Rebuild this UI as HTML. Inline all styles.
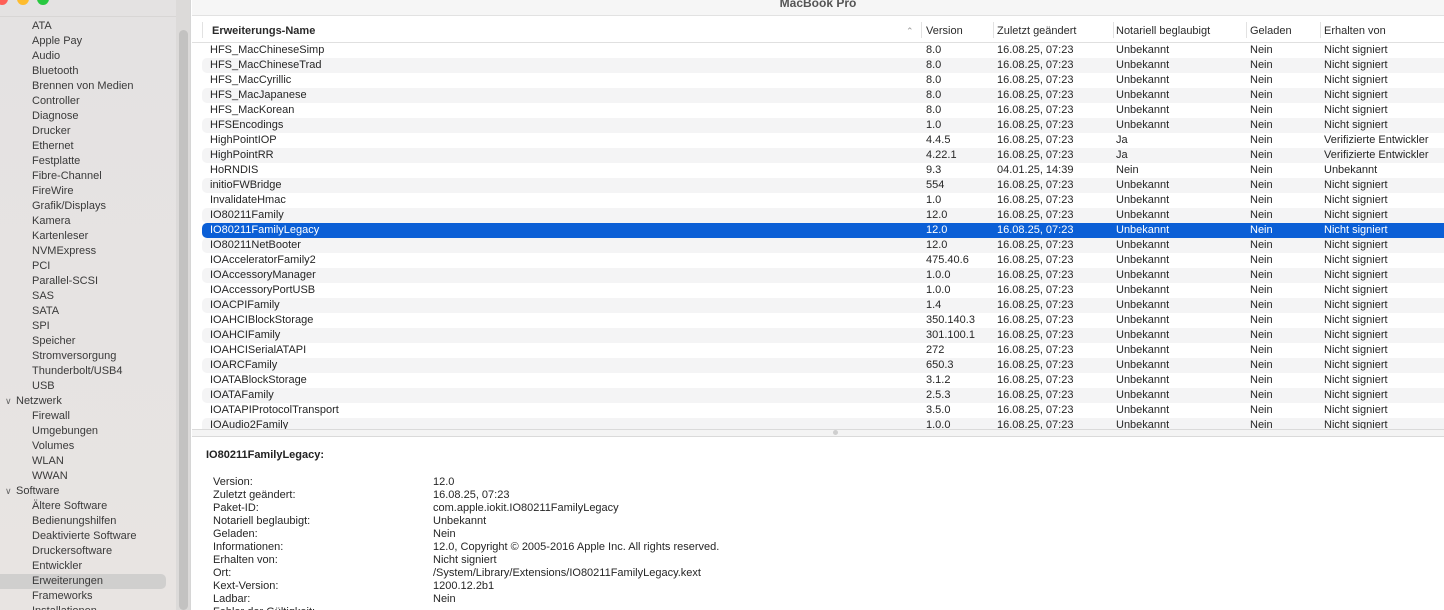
<!DOCTYPE html>
<html><head><meta charset="utf-8"><style>
*{margin:0;padding:0;box-sizing:border-box}
html,body{width:1444px;height:610px;overflow:hidden}
body{font-family:"Liberation Sans",sans-serif;font-size:11px;color:#262626;background:#fff;position:relative}
#sb{position:absolute;left:0;top:0;width:191px;height:610px;background:linear-gradient(#e4e2e2,#e8e4e2);border-right:1px solid #d6d6d6;overflow:hidden}
.tl{position:absolute;top:-7px;width:12px;height:12px;border-radius:50%}
#sb .it{position:absolute;left:32px;height:15px;line-height:15px;color:#3a3a3a}
#sb .sec{position:absolute;left:16px;height:15px;line-height:15px;color:#3a3a3a}
#sb .chev{position:absolute;left:5px;color:#666;font-size:9px}
#sel{position:absolute;left:0;top:574px;width:166px;height:15px;background:#d0cfce;border-radius:0 5px 5px 0}
#track{position:absolute;left:176px;top:0;width:15px;height:610px;background:#dcdad9}
#thumb{position:absolute;left:179px;top:30px;width:9px;height:580px;background:#c3c2c1;border-radius:5px}
#title{position:absolute;left:192px;top:0;right:0;height:16px;background:#f6f6f6;border-bottom:1px solid #e2e2e2;text-align:center;font-weight:bold;color:#555;font-size:12px;line-height:6px;overflow:hidden}
#hdr{position:absolute;left:192px;top:17px;right:0;height:26px;border-bottom:1px solid #e0e0e0;background:#fff}
#hdr span{position:absolute;top:8px;color:#2a2a2a}
#hdr i{position:absolute;top:5px;width:1px;height:16px;background:#e2e2e2}
.row{position:absolute;left:202px;right:0;height:15px;line-height:15px;white-space:nowrap}
.row.s{background:#f4f4f5;border-radius:5px 0 0 5px}
.row.h{background:#0b5fd6;color:#fff;border-radius:5px 0 0 5px}
.row span{position:absolute;top:0}
.c1{left:8px}.c2{left:724px}.c3{left:795px}.c4{left:914px}.c5{left:1048px}.c6{left:1122px}
#list{position:absolute;left:0;top:44px;right:0;height:385px;overflow:hidden}
#list .in{position:absolute;left:0;right:0;top:-1px}
#div{position:absolute;left:192px;top:429px;right:0;height:8px;border-top:1px solid #dadada;border-bottom:1px solid #dadada;background:#f4f4f4}
#dot{position:absolute;left:833px;top:430px;width:5px;height:5px;border-radius:50%;background:#cfcfcf}
.lb{position:absolute;left:213px;line-height:13px}
.vl{position:absolute;left:433px;line-height:13px}
</style></head><body>
<div id="sb">
<div class="tl" style="left:-4px;background:#fe5f57"></div>
<div class="tl" style="left:17px;background:#febc2e"></div>
<div class="tl" style="left:37px;background:#28c840"></div>
<div style="position:absolute;left:0;top:16px;width:176px;height:1px;background:#d8d6d5"></div>
<div id="track"></div><div id="thumb"></div>
<div id="sel"></div>
<div class="it" style="top:19px">ATA</div>
<div class="it" style="top:34px">Apple Pay</div>
<div class="it" style="top:49px">Audio</div>
<div class="it" style="top:64px">Bluetooth</div>
<div class="it" style="top:79px">Brennen von Medien</div>
<div class="it" style="top:94px">Controller</div>
<div class="it" style="top:109px">Diagnose</div>
<div class="it" style="top:124px">Drucker</div>
<div class="it" style="top:139px">Ethernet</div>
<div class="it" style="top:154px">Festplatte</div>
<div class="it" style="top:169px">Fibre-Channel</div>
<div class="it" style="top:184px">FireWire</div>
<div class="it" style="top:199px">Grafik/Displays</div>
<div class="it" style="top:214px">Kamera</div>
<div class="it" style="top:229px">Kartenleser</div>
<div class="it" style="top:244px">NVMExpress</div>
<div class="it" style="top:259px">PCI</div>
<div class="it" style="top:274px">Parallel-SCSI</div>
<div class="it" style="top:289px">SAS</div>
<div class="it" style="top:304px">SATA</div>
<div class="it" style="top:319px">SPI</div>
<div class="it" style="top:334px">Speicher</div>
<div class="it" style="top:349px">Stromversorgung</div>
<div class="it" style="top:364px">Thunderbolt/USB4</div>
<div class="it" style="top:379px">USB</div>
<div class="chev" style="top:396px">&#8744;</div><div class="sec" style="top:394px">Netzwerk</div>
<div class="it" style="top:409px">Firewall</div>
<div class="it" style="top:424px">Umgebungen</div>
<div class="it" style="top:439px">Volumes</div>
<div class="it" style="top:454px">WLAN</div>
<div class="it" style="top:469px">WWAN</div>
<div class="chev" style="top:486px">&#8744;</div><div class="sec" style="top:484px">Software</div>
<div class="it" style="top:499px">Ältere Software</div>
<div class="it" style="top:514px">Bedienungshilfen</div>
<div class="it" style="top:529px">Deaktivierte Software</div>
<div class="it" style="top:544px">Druckersoftware</div>
<div class="it" style="top:559px">Entwickler</div>
<div class="it" style="top:574px">Erweiterungen</div>
<div class="it" style="top:589px">Frameworks</div>
<div class="it" style="top:604px">Installationen</div>
</div>
<div id="title">MacBook Pro</div>
<div id="hdr">
<i style="left:10px"></i>
<span style="left:20px;font-weight:bold">Erweiterungs-Name</span>
<span style="left:714px;color:#999;font-size:9px;top:9px">&#8963;</span>
<i style="left:729px"></i><span style="left:734px">Version</span>
<i style="left:801px"></i><span style="left:805px">Zuletzt geändert</span>
<i style="left:921px"></i><span style="left:924px">Notariell beglaubigt</span>
<i style="left:1054px"></i><span style="left:1058px">Geladen</span>
<i style="left:1128px"></i><span style="left:1132px">Erhalten von</span>
</div>
<div id="list"><div class="in">
<div class="row" style="top:0"><span class="c1">HFS_MacChineseSimp</span><span class="c2">8.0</span><span class="c3">16.08.25, 07:23</span><span class="c4">Unbekannt</span><span class="c5">Nein</span><span class="c6">Nicht signiert</span></div>
<div class="row s" style="top:15px"><span class="c1">HFS_MacChineseTrad</span><span class="c2">8.0</span><span class="c3">16.08.25, 07:23</span><span class="c4">Unbekannt</span><span class="c5">Nein</span><span class="c6">Nicht signiert</span></div>
<div class="row" style="top:30px"><span class="c1">HFS_MacCyrillic</span><span class="c2">8.0</span><span class="c3">16.08.25, 07:23</span><span class="c4">Unbekannt</span><span class="c5">Nein</span><span class="c6">Nicht signiert</span></div>
<div class="row s" style="top:45px"><span class="c1">HFS_MacJapanese</span><span class="c2">8.0</span><span class="c3">16.08.25, 07:23</span><span class="c4">Unbekannt</span><span class="c5">Nein</span><span class="c6">Nicht signiert</span></div>
<div class="row" style="top:60px"><span class="c1">HFS_MacKorean</span><span class="c2">8.0</span><span class="c3">16.08.25, 07:23</span><span class="c4">Unbekannt</span><span class="c5">Nein</span><span class="c6">Nicht signiert</span></div>
<div class="row s" style="top:75px"><span class="c1">HFSEncodings</span><span class="c2">1.0</span><span class="c3">16.08.25, 07:23</span><span class="c4">Unbekannt</span><span class="c5">Nein</span><span class="c6">Nicht signiert</span></div>
<div class="row" style="top:90px"><span class="c1">HighPointIOP</span><span class="c2">4.4.5</span><span class="c3">16.08.25, 07:23</span><span class="c4">Ja</span><span class="c5">Nein</span><span class="c6">Verifizierte Entwickler</span></div>
<div class="row s" style="top:105px"><span class="c1">HighPointRR</span><span class="c2">4.22.1</span><span class="c3">16.08.25, 07:23</span><span class="c4">Ja</span><span class="c5">Nein</span><span class="c6">Verifizierte Entwickler</span></div>
<div class="row" style="top:120px"><span class="c1">HoRNDIS</span><span class="c2">9.3</span><span class="c3">04.01.25, 14:39</span><span class="c4">Nein</span><span class="c5">Nein</span><span class="c6">Unbekannt</span></div>
<div class="row s" style="top:135px"><span class="c1">initioFWBridge</span><span class="c2">554</span><span class="c3">16.08.25, 07:23</span><span class="c4">Unbekannt</span><span class="c5">Nein</span><span class="c6">Nicht signiert</span></div>
<div class="row" style="top:150px"><span class="c1">InvalidateHmac</span><span class="c2">1.0</span><span class="c3">16.08.25, 07:23</span><span class="c4">Unbekannt</span><span class="c5">Nein</span><span class="c6">Nicht signiert</span></div>
<div class="row s" style="top:165px"><span class="c1">IO80211Family</span><span class="c2">12.0</span><span class="c3">16.08.25, 07:23</span><span class="c4">Unbekannt</span><span class="c5">Nein</span><span class="c6">Nicht signiert</span></div>
<div class="row h" style="top:180px"><span class="c1">IO80211FamilyLegacy</span><span class="c2">12.0</span><span class="c3">16.08.25, 07:23</span><span class="c4">Unbekannt</span><span class="c5">Nein</span><span class="c6">Nicht signiert</span></div>
<div class="row s" style="top:195px"><span class="c1">IO80211NetBooter</span><span class="c2">12.0</span><span class="c3">16.08.25, 07:23</span><span class="c4">Unbekannt</span><span class="c5">Nein</span><span class="c6">Nicht signiert</span></div>
<div class="row" style="top:210px"><span class="c1">IOAcceleratorFamily2</span><span class="c2">475.40.6</span><span class="c3">16.08.25, 07:23</span><span class="c4">Unbekannt</span><span class="c5">Nein</span><span class="c6">Nicht signiert</span></div>
<div class="row s" style="top:225px"><span class="c1">IOAccessoryManager</span><span class="c2">1.0.0</span><span class="c3">16.08.25, 07:23</span><span class="c4">Unbekannt</span><span class="c5">Nein</span><span class="c6">Nicht signiert</span></div>
<div class="row" style="top:240px"><span class="c1">IOAccessoryPortUSB</span><span class="c2">1.0.0</span><span class="c3">16.08.25, 07:23</span><span class="c4">Unbekannt</span><span class="c5">Nein</span><span class="c6">Nicht signiert</span></div>
<div class="row s" style="top:255px"><span class="c1">IOACPIFamily</span><span class="c2">1.4</span><span class="c3">16.08.25, 07:23</span><span class="c4">Unbekannt</span><span class="c5">Nein</span><span class="c6">Nicht signiert</span></div>
<div class="row" style="top:270px"><span class="c1">IOAHCIBlockStorage</span><span class="c2">350.140.3</span><span class="c3">16.08.25, 07:23</span><span class="c4">Unbekannt</span><span class="c5">Nein</span><span class="c6">Nicht signiert</span></div>
<div class="row s" style="top:285px"><span class="c1">IOAHCIFamily</span><span class="c2">301.100.1</span><span class="c3">16.08.25, 07:23</span><span class="c4">Unbekannt</span><span class="c5">Nein</span><span class="c6">Nicht signiert</span></div>
<div class="row" style="top:300px"><span class="c1">IOAHCISerialATAPI</span><span class="c2">272</span><span class="c3">16.08.25, 07:23</span><span class="c4">Unbekannt</span><span class="c5">Nein</span><span class="c6">Nicht signiert</span></div>
<div class="row s" style="top:315px"><span class="c1">IOARCFamily</span><span class="c2">650.3</span><span class="c3">16.08.25, 07:23</span><span class="c4">Unbekannt</span><span class="c5">Nein</span><span class="c6">Nicht signiert</span></div>
<div class="row" style="top:330px"><span class="c1">IOATABlockStorage</span><span class="c2">3.1.2</span><span class="c3">16.08.25, 07:23</span><span class="c4">Unbekannt</span><span class="c5">Nein</span><span class="c6">Nicht signiert</span></div>
<div class="row s" style="top:345px"><span class="c1">IOATAFamily</span><span class="c2">2.5.3</span><span class="c3">16.08.25, 07:23</span><span class="c4">Unbekannt</span><span class="c5">Nein</span><span class="c6">Nicht signiert</span></div>
<div class="row" style="top:360px"><span class="c1">IOATAPIProtocolTransport</span><span class="c2">3.5.0</span><span class="c3">16.08.25, 07:23</span><span class="c4">Unbekannt</span><span class="c5">Nein</span><span class="c6">Nicht signiert</span></div>
<div class="row s" style="top:375px"><span class="c1">IOAudio2Family</span><span class="c2">1.0.0</span><span class="c3">16.08.25, 07:23</span><span class="c4">Unbekannt</span><span class="c5">Nein</span><span class="c6">Nicht signiert</span></div>
</div></div>
<div id="div"></div><div id="dot"></div>
<div style="position:absolute;left:206px;top:449px;font-weight:bold;color:#222">IO80211FamilyLegacy:</div>
<div class="lb" style="top:476px">Version:</div><div class="vl" style="top:476px">12.0</div>
<div class="lb" style="top:489px">Zuletzt geändert:</div><div class="vl" style="top:489px">16.08.25, 07:23</div>
<div class="lb" style="top:502px">Paket-ID:</div><div class="vl" style="top:502px">com.apple.iokit.IO80211FamilyLegacy</div>
<div class="lb" style="top:515px">Notariell beglaubigt:</div><div class="vl" style="top:515px">Unbekannt</div>
<div class="lb" style="top:528px">Geladen:</div><div class="vl" style="top:528px">Nein</div>
<div class="lb" style="top:541px">Informationen:</div><div class="vl" style="top:541px">12.0, Copyright © 2005-2016 Apple Inc. All rights reserved.</div>
<div class="lb" style="top:554px">Erhalten von:</div><div class="vl" style="top:554px">Nicht signiert</div>
<div class="lb" style="top:567px">Ort:</div><div class="vl" style="top:567px">/System/Library/Extensions/IO80211FamilyLegacy.kext</div>
<div class="lb" style="top:580px">Kext-Version:</div><div class="vl" style="top:580px">1200.12.2b1</div>
<div class="lb" style="top:593px">Ladbar:</div><div class="vl" style="top:593px">Nein</div>
<div class="lb" style="top:606px">Fehler der Gültigkeit:</div>
</body></html>
